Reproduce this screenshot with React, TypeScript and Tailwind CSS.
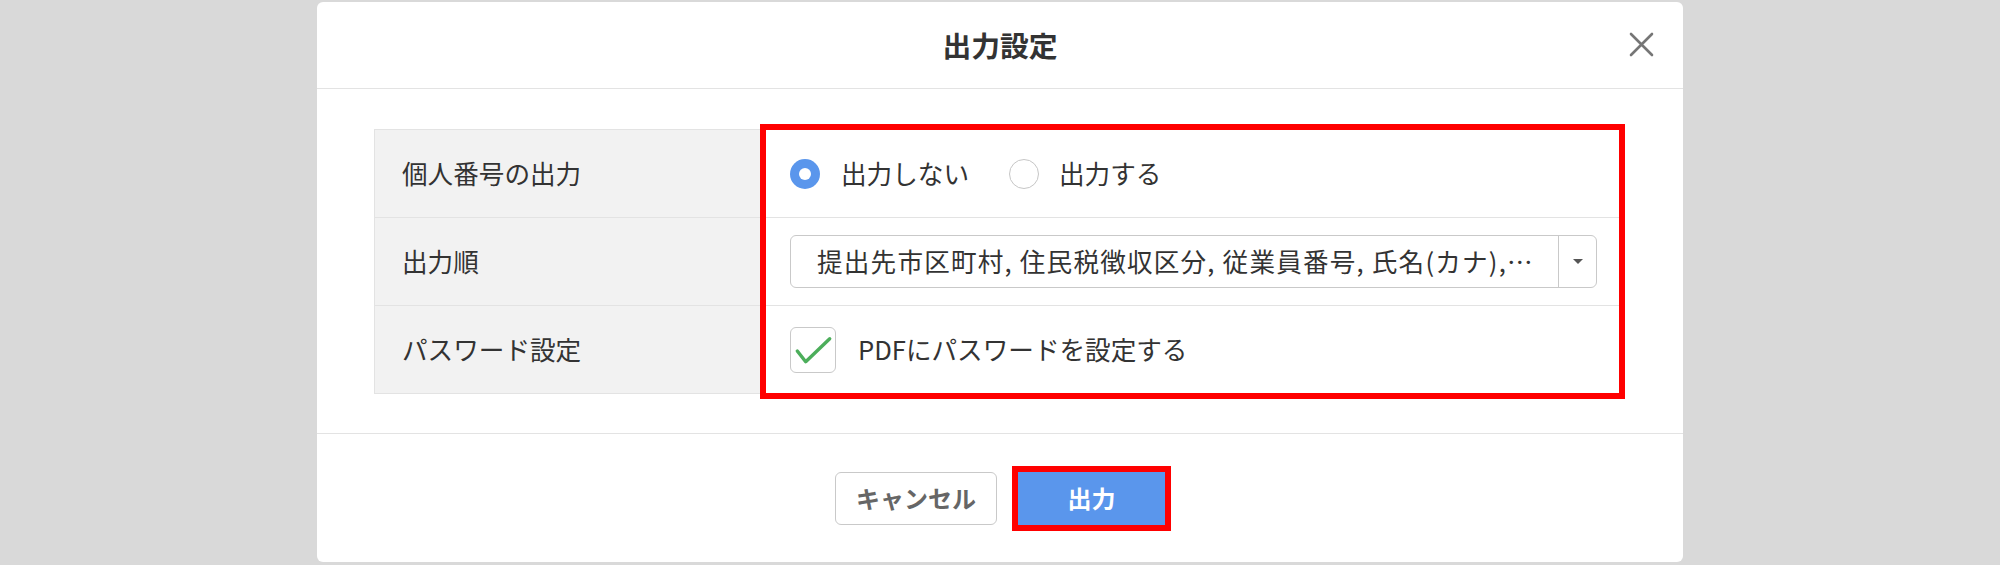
import React from "react";

export default function App() {
  const font = {
    fontFamily: '"Noto Sans CJK JP", "Noto Sans", sans-serif',
  };
  return (
    <div
      className="w-[2000px] h-[565px] bg-[#d9d9d9] flex justify-center pt-[2px] overflow-hidden"
      style={font}
    >
      <div className="w-[1366px] h-[560px] bg-white rounded-[6px] flex flex-col">
        {/* header */}
        <div className="relative h-[87px] shrink-0 flex items-center justify-center border-b border-[#e3e3e3]">
          <span className="text-[28.8px] font-bold text-[#333] leading-none">出力設定</span>
          <button className="absolute right-[29px] top-[30px] w-[25px] h-[25px] flex items-center justify-center">
            <svg width="25" height="25" viewBox="0 0 25 25">
              <path d="M2 2 L23 23 M23 2 L2 23" stroke="#767676" strokeWidth="2.6" strokeLinecap="round" />
            </svg>
          </button>
        </div>

        {/* body */}
        <div className="flex-1 pl-[57px] pr-[62px] pt-[40px]">
          <div className="relative border border-[#e3e3e3] text-[25.6px] text-[#333]">
            {/* row 1 */}
            <div className="flex h-[88px] border-b border-[#e3e3e3]">
              <div className="w-[389px] shrink-0 bg-[#f2f2f2] border-r border-[#e3e3e3] flex items-center pl-[27px]">
                個人番号の出力
              </div>
              <div className="flex-1 min-w-0 flex items-center pl-[26px]">
                <span className="w-[30px] h-[30px] rounded-full bg-[#5a96ec] flex items-center justify-center">
                  <span className="w-[12px] h-[12px] rounded-full bg-white" />
                </span>
                <span className="ml-[21px]">出力しない</span>
                <span className="ml-[40px] w-[30px] h-[30px] rounded-full border-[1.5px] border-[#c6c6c6] bg-white" />
                <span className="ml-[20px]">出力する</span>
              </div>
            </div>
            {/* row 2 */}
            <div className="flex h-[88px] border-b border-[#e3e3e3]">
              <div className="w-[389px] shrink-0 bg-[#f2f2f2] border-r border-[#e3e3e3] flex items-center pl-[27px]">
                出力順
              </div>
              <div className="flex-1 min-w-0 flex items-center pl-[26px] pr-[23px]">
                <div className="flex-1 min-w-0 h-[53px] border border-[#c9c9c9] rounded-[6px] flex items-stretch">
                  <div className="flex-1 min-w-0 flex items-center pl-[26px] pr-[4px] overflow-hidden">
                    <span className="block whitespace-nowrap tracking-[1.2px]">
                      提出先市区町村, 住民税徴収区分, 従業員番号, 氏名(カナ),…
                    </span>
                  </div>
                  <div className="w-[38px] shrink-0 border-l border-[#c9c9c9] flex items-center justify-center">
                    <svg width="10" height="5" viewBox="0 0 10 5">
                      <path d="M0 0 L10 0 L5 5 Z" fill="#555" />
                    </svg>
                  </div>
                </div>
              </div>
            </div>
            {/* row 3 */}
            <div className="flex h-[87px]">
              <div className="w-[389px] shrink-0 bg-[#f2f2f2] border-r border-[#e3e3e3] flex items-center pl-[27px]">
                パスワード設定
              </div>
              <div className="flex-1 min-w-0 flex items-center pl-[26px]">
                <span className="w-[46px] h-[46px] rounded-[6px] border-[1.5px] border-[#c9c9c9] bg-white relative">
                  <svg className="absolute left-[-1.5px] top-[-1.5px]" width="46" height="46" viewBox="0 0 46 46">
                    <path
                      d="M7.3 25 L15.7 35.7 L39.7 12.7"
                      fill="none"
                      stroke="#4cae5b"
                      strokeWidth="3.4"
                      strokeLinecap="round"
                      strokeLinejoin="round"
                    />
                  </svg>
                </span>
                <span className="ml-[22px]">PDFにパスワードを設定する</span>
              </div>
            </div>
            {/* red annotation */}
            <div className="absolute left-[385px] top-[-6px] right-[-5px] bottom-[-6px] border-[6px] border-[#ff0000] pointer-events-none" />
          </div>
        </div>

        {/* footer */}
        <div className="h-[129px] shrink-0 border-t border-[#e3e3e3] flex items-center justify-center gap-[21px]">
          <button className="w-[162px] h-[53px] rounded-[6px] border-[1.5px] border-[#c9c9c9] bg-white text-[24px] font-bold text-[#666] flex items-center justify-center">
            キャンセル
          </button>
          <div className="relative">
            <button className="w-[147px] h-[53px] bg-[#5a96ec] text-[24px] font-bold text-white flex items-center justify-center">
              出力
            </button>
            <div className="absolute -left-[6px] -top-[6px] -right-[6px] -bottom-[6px] border-[6px] border-[#ff0000] pointer-events-none" />
          </div>
        </div>
      </div>
    </div>
  );
}
